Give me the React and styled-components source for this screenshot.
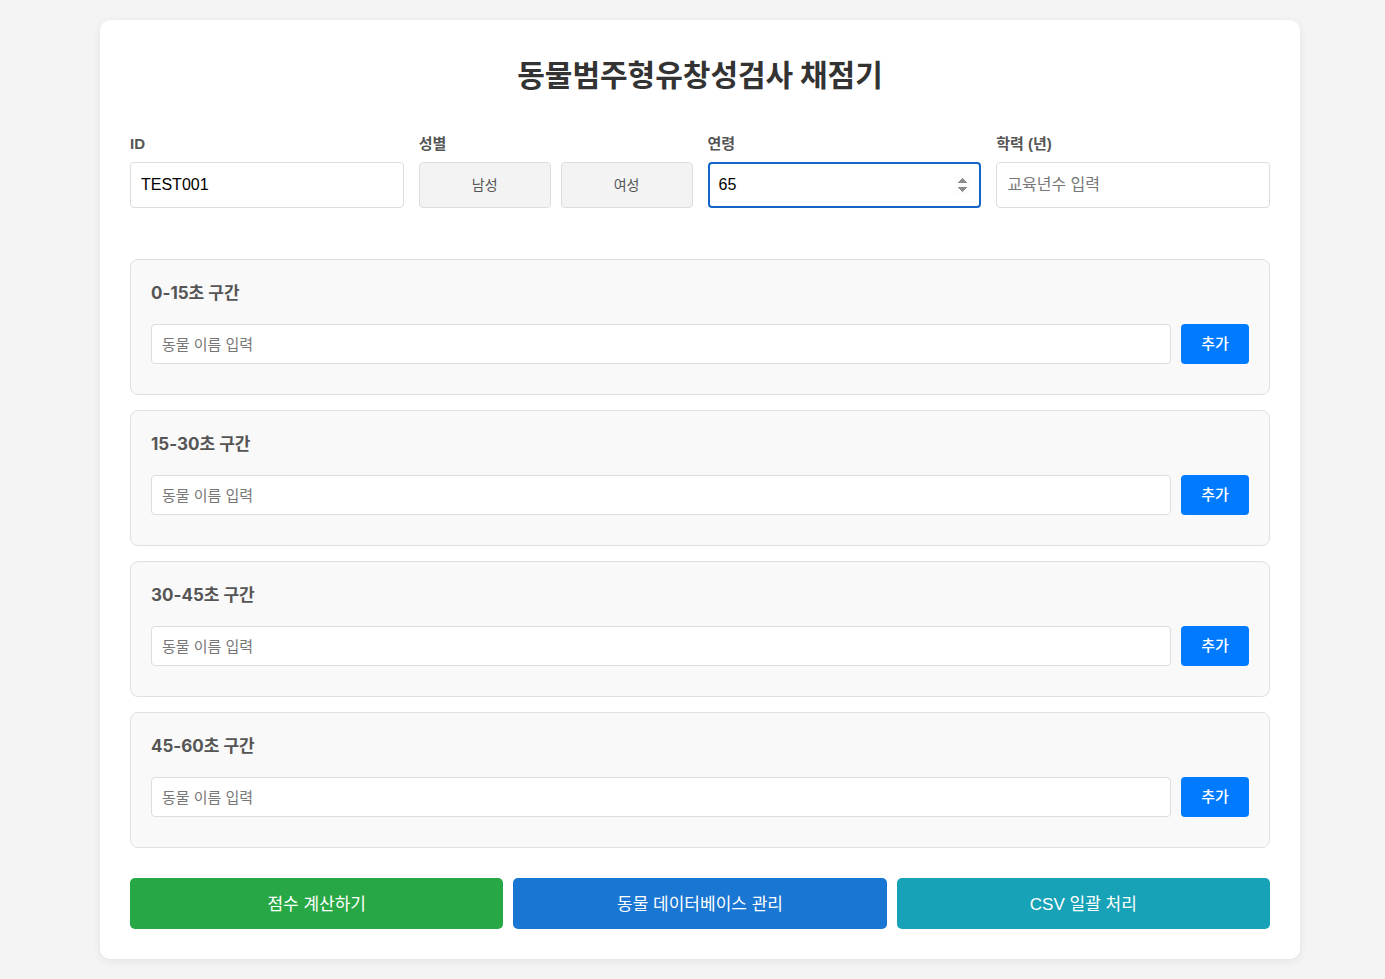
import React from 'react';
import styled, { createGlobalStyle } from 'styled-components';

const GlobalStyle = createGlobalStyle`
    body {
        margin: 0;
        background: #f4f4f4;
        font-family: "Liberation Sans", "Noto Sans CJK KR", sans-serif;
        color: #333;
    }
    * {
        box-sizing: border-box;
    }
`;

const Card = styled.div`
    width: 1200px;
    margin: 20px 0 20px 100px;
    padding: 30px;
    background: #fff;
    border-radius: 10px;
    box-shadow: 0 2px 10px rgba(0, 0, 0, 0.08);
`;

const Title = styled.h1`
    margin: 3px 0 42px;
    font-size: 30px;
    line-height: 40px;
    text-align: center;
    color: #333;
    font-family: "Noto Sans CJK KR", sans-serif;
    font-weight: 700;
`;

const InfoGrid = styled.div`
    display: grid;
    grid-template-columns: repeat(4, 1fr);
    gap: 15px;
    margin-bottom: 51px;
`;

const Field = styled.div`
    display: flex;
    flex-direction: column;
`;

const Label = styled.label`
    font-size: 15px;
    line-height: 17px;
    font-weight: 700;
    color: #555;
    margin-bottom: 10px;
`;

const TextInput = styled.input`
    height: ${(p) => (p.small ? '40px' : '46px')};
    width: 100%;
    padding: 0 ${(p) => (p.focused ? '9px' : '10px')};
    border: ${(p) => (p.focused ? '2px solid #1565c8' : '1px solid #ddd')};
    border-radius: 4px;
    font-family: "Liberation Sans", "Noto Sans CJK KR", sans-serif;
    font-size: ${(p) => (p.small ? '15px' : '16px')};
    color: #000;
    background: #fff;
    outline: none;

    &::placeholder {
        color: #777;
    }
`;

const GenderRow = styled.div`
    display: flex;
    gap: 10px;
`;

const GenderButton = styled.button`
    flex: 1;
    height: 46px;
    padding: 0 0 2px;
    border: 1px solid #ddd;
    border-radius: 4px;
    background: #f3f3f3;
    color: #555;
    font-family: "Noto Sans CJK KR", sans-serif;
    font-size: 14px;
    cursor: pointer;
`;

const Sections = styled.div`
    display: flex;
    flex-direction: column;
    gap: 15px;
    margin-bottom: 30px;
`;

const Section = styled.div`
    padding: 20px 20px 30px;
    background: #f9f9f9;
    border: 1px solid #e0e0e0;
    border-radius: 8px;
`;

const SectionTitle = styled.h3`
    margin: 0 0 18px;
    font-family: Inter, "Noto Sans CJK KR", sans-serif;
    font-size: 17px;
    line-height: 26px;
    font-weight: 700;
    color: #555;
`;

const AddRow = styled.div`
    display: flex;
    gap: 10px;
`;

const AddButton = styled.button`
    width: 68px;
    height: 40px;
    flex-shrink: 0;
    padding: 0 0 3px;
    border: none;
    border-radius: 4px;
    background: #007bff;
    color: #fff;
    font-family: "Noto Sans CJK KR", sans-serif;
    font-size: 15px;
    font-weight: 500;
    cursor: pointer;
`;

const ActionRow = styled.div`
    display: grid;
    grid-template-columns: repeat(3, 1fr);
    gap: 10px;
`;

const ActionButton = styled.button`
    height: 51px;
    padding: 0 0 3px;
    border: none;
    border-radius: 5px;
    background: ${(p) => p.color};
    color: #fff;
    font-family: "Liberation Sans", "Noto Sans CJK KR", sans-serif;
    font-size: 17px;
    cursor: pointer;
`;

const intervals = ['0-15초 구간', '15-30초 구간', '30-45초 구간', '45-60초 구간'];

const App = () => {
    return (
        <>
            <GlobalStyle />
            <Card>
                <Title>동물범주형유창성검사 채점기</Title>
                <InfoGrid>
                    <Field>
                        <Label>ID</Label>
                        <TextInput defaultValue="TEST001" />
                    </Field>
                    <Field>
                        <Label>성별</Label>
                        <GenderRow>
                            <GenderButton>남성</GenderButton>
                            <GenderButton>여성</GenderButton>
                        </GenderRow>
                    </Field>
                    <Field>
                        <Label>연령</Label>
                        <TextInput type="number" defaultValue="65" focused autoFocus />
                    </Field>
                    <Field>
                        <Label>학력 (년)</Label>
                        <TextInput placeholder="교육년수 입력" />
                    </Field>
                </InfoGrid>
                <Sections>
                    {intervals.map((name) => (
                        <Section key={name}>
                            <SectionTitle>{name}</SectionTitle>
                            <AddRow>
                                <TextInput small placeholder="동물 이름 입력" />
                                <AddButton>추가</AddButton>
                            </AddRow>
                        </Section>
                    ))}
                </Sections>
                <ActionRow>
                    <ActionButton color="#28a745">점수 계산하기</ActionButton>
                    <ActionButton color="#1976d2">동물 데이터베이스 관리</ActionButton>
                    <ActionButton color="#17a2b8">CSV 일괄 처리</ActionButton>
                </ActionRow>
            </Card>
        </>
    );
};

export default App;
